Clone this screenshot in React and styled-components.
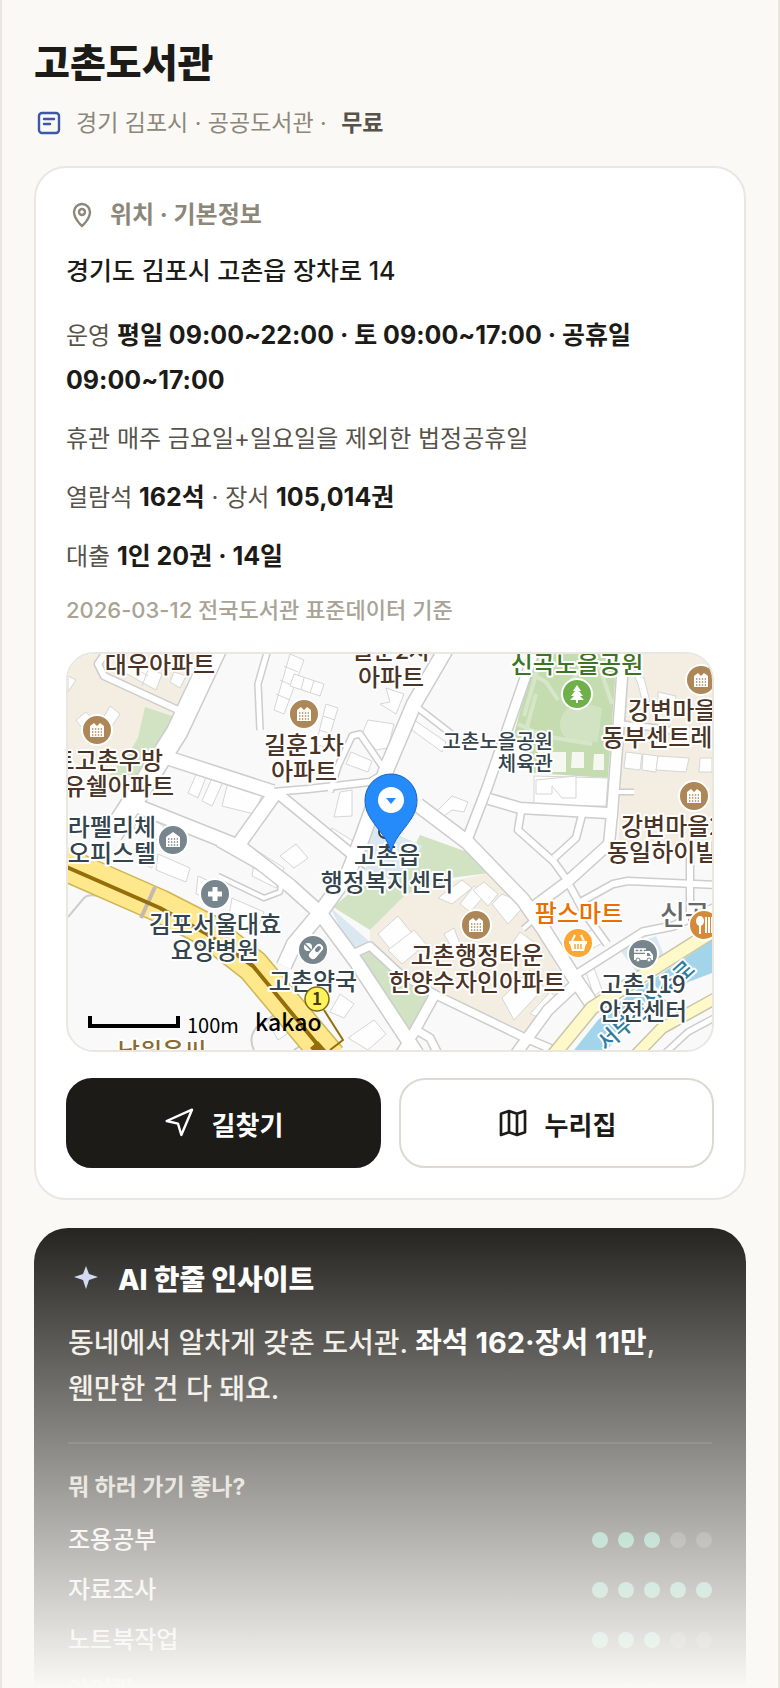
import styled, { createGlobalStyle } from 'styled-components';

const GlobalStyle = createGlobalStyle`
  * {
    box-sizing: border-box;
  }

  body {
    margin: 0;
    background-color: #faf9f6;
    color: #1c1b17;
    font-family: Inter, 'Noto Sans CJK KR', sans-serif;
    word-break: keep-all;
  }

  h1, h2, h3, p, ul {
    margin: 0;
    padding: 0;
  }
`;

const Page = styled.main`
  position: relative;
  height: 100vh;
  overflow: hidden;
  padding: 36px 32px 0;
  border: solid #e9e7e0;
  border-width: 0 2px;
`;

const Title = styled.h1`
  font-size: 39px;
  font-weight: 800;
  line-height: 54px;
`;

const Meta = styled.p`
  display: flex;
  align-items: center;
  gap: 12px;
  margin-top: 16px;
  font-size: 23px;
  line-height: 34px;
  color: #8c8779;

  strong {
    margin-left: 8px;
    font-weight: 600;
    color: #57534a;
  }
`;

const Card = styled.section`
  margin-top: 26px;
  padding: 30px;
  border: 2px solid #eae7e1;
  border-radius: 32px;
  background-color: #ffffff;
`;

const CardTitle = styled.h2`
  display: flex;
  align-items: center;
  gap: 12px;
  font-size: 24px;
  font-weight: 700;
  line-height: 34px;
  color: #8c8779;
`;

const Address = styled.p`
  margin-top: 17px;
  font-size: 25px;
  font-weight: 500;
  line-height: 44px;
`;

const InfoList = styled.div`
  display: flex;
  flex-direction: column;
  gap: 14px;
  margin-top: 20px;
`;

const InfoRow = styled.p`
  font-size: 24px;
  line-height: 44px;
  color: #57534a;

  strong {
    font-size: 25px;
    font-weight: 700;
    color: #1c1b17;
  }
`;

const Source = styled.p`
  margin-top: 13px;
  font-size: 22px;
  font-weight: 500;
  line-height: 36px;
  color: #a8a395;
`;

const MapBox = styled.div`
  height: 400px;
  margin-top: 24px;
  border: 2px solid #eae7e1;
  border-radius: 28px;
  overflow: hidden;
  background-color: #f9f9f9;

  svg {
    display: block;
    width: 100%;
    height: 100%;
  }
`;

const MapLabel = styled.text`
  font-family: 'Noto Sans CJK KR', sans-serif;
  font-size: ${({ $size }) => $size || 24}px;
  font-weight: 500;
  fill: ${({ $color }) => $color || '#4b3325'};
  stroke: #ffffff;
  stroke-width: 4px;
  stroke-linejoin: round;
  paint-order: stroke;
`;

const MapMark = styled.text`
  font-family: 'Noto Sans CJK KR', sans-serif;
  font-size: ${({ $size }) => $size}px;
  font-weight: ${({ $weight }) => $weight || 400};
  fill: ${({ $color }) => $color || '#000000'};
`;

const Actions = styled.div`
  display: flex;
  gap: 18px;
  margin-top: 26px;
`;

const ActionButton = styled.button`
  flex: 1;
  display: flex;
  align-items: center;
  justify-content: center;
  gap: 16px;
  height: 90px;
  border: 2px solid ${({ $primary }) => ($primary ? '#1c1b17' : '#dcd9d0')};
  border-radius: 26px;
  background-color: ${({ $primary }) => ($primary ? '#1c1b17' : '#ffffff')};
  color: ${({ $primary }) => ($primary ? '#ffffff' : '#1c1b17')};
  font-family: inherit;
  font-size: 26px;
  font-weight: 700;
  cursor: pointer;
`;

const Insight = styled.section`
  margin-top: 28px;
  padding: 34px;
  border-radius: 34px;
  background-color: #1c1b17;
`;

const InsightTitle = styled.h2`
  display: flex;
  align-items: center;
  gap: 14px;
  font-size: 28px;
  font-weight: 800;
  line-height: 36px;
  color: #ffffff;
`;

const InsightText = styled.p`
  margin-top: 22px;
  padding-bottom: 30px;
  border-bottom: 2px solid #33322e;
  font-size: 28px;
  font-weight: 500;
  line-height: 46px;
  color: #efece3;

  strong {
    font-size: 29px;
    font-weight: 700;
    color: #ffffff;
  }
`;

const Question = styled.h3`
  margin-top: 27px;
  font-size: 23px;
  font-weight: 700;
  line-height: 32px;
  color: #d5d0c2;
`;

const ScoreList = styled.ul`
  margin-top: 9px;
  list-style: none;
`;

const ScoreRow = styled.li`
  display: flex;
  align-items: center;
  justify-content: space-between;
  height: 50px;
  font-size: 24px;
  font-weight: 500;
  color: #f3f1ea;
`;

const Dots = styled.span`
  display: flex;
  gap: 10px;
  margin-top: 6px;
`;

const Dot = styled.span`
  width: 16px;
  height: 16px;
  border-radius: 50%;
  background-color: ${({ $on }) => ($on ? '#56b28f' : '#454440')};
`;

// 아래쪽으로 갈수록 배경색으로 사라지는 막
const Fade = styled.div`
  position: absolute;
  left: 0;
  right: 0;
  bottom: 0;
  height: 480px;
  background: linear-gradient(rgba(250, 249, 246, 0), #faf9f6);
  pointer-events: none;
`;

const scores = [
  { name: '조용공부', score: 3 },
  { name: '자료조사', score: 5 },
  { name: '노트북작업', score: 3 },
  { name: '아이랑', score: 3 },
];

const roads = [
  { d: 'M148-5L109 78L90 108L62 152L44 180', w: 20 },
  { d: 'M94 102L205 138', w: 13 },
  { d: 'M205 138L240 135L302 128L312 122', w: 6 },
  { d: 'M208 138L168 194', w: 13 },
  { d: 'M208 138L286 202L300 210', w: 9 },
  { d: 'M64 150L172 193L222 232L252 259L289 309L349 400', w: 13 },
  { d: 'M378-5L346 50L319 114L294 184L280 220L252 259L226 290L216 312', w: 14 },
  { d: 'M350 54L386 82', w: 5 },
  { d: 'M350 151L399 188L455 246L476 276L505 322L524 350', w: 13 },
  { d: 'M467-5L455 30L419 134L399 186', w: 9 },
  { d: 'M421 145L452 154L540 159', w: 10 },
  { d: 'M556-5L550 80L544 160L541 190L499 228L464 254', w: 10 },
  { d: 'M514 161L508 184L486 204', w: 6 },
  { d: 'M453 158L450 176L486 208L499 226', w: 6 },
  { d: 'M509 250L545 230L560 227L648 231', w: 6 },
  { d: 'M502 232L516 258L539 290', w: 6 },
  { d: 'M509 320L575 278L605 272L650 252', w: 7 },
  { d: 'M622 196L622 258', w: 6 },
  { d: 'M510 328L480 356L445 404', w: 10 },
  { d: 'M287 299L302 292L330 318L366 340L455 383L500 402', w: 7 },
  { d: 'M366 342L345 380L330 404', w: 9 },
  { d: 'M345 374L362 384L370 400', w: 7 },
  { d: 'M553 70L590 74L610 78', w: 5 },
  { d: 'M548 138L566 138', w: 4 },
  { d: 'M455 275L470 262', w: 4 },
  { d: 'M262 138L270 112L284 82L292 80L314 112', w: 5 },
  { d: 'M200-5L190 30L192 76', w: 5 },
  { d: 'M40-5L30 10L36 22L110 56', w: 6 },
  { d: 'M150 190L214 226L212 238L196 244L150 222', w: 4 },
];

const buildings = [
  'M52 16L68 8L94 20L88 36Z',
  'M64 12L80 22M80 16L74 32',
  'M106 18L118 22L112 34L102 28Z',
  'M42 52L52 60L44 72L34 66Z',
  'M8 66L18 58L30 72L22 84Z',
  'M0 22L8 26L0 38Z',
  'M130 116L139 120L130 144L120 139Z',
  'M144 124L155 128L144 152L134 147Z',
  'M160 128L195 139L186 160L154 152Z',
  'M222 0L236 6L216 60L206 56Z',
  'M216 12L230 18M212 26L226 32M208 40L222 46',
  'M226 20L256 30L252 42L222 32Z',
  'M236 24L233 36M246 27L242 39',
  'M258 50L270 54L258 94L248 90Z',
  'M255 62L267 66M251 76L263 80',
  'M300 66L326 70L320 94L308 96L294 80Z',
  'M283 98L304 107L300 118L278 110Z',
  'M272 138L284 136L284 162L266 163Z',
  'M264 174L290 190L284 204L260 182Z',
  'M318 34L336 40L328 60L312 50L322 48Z',
  'M346 66L378 88L374 98L344 76Z',
  'M368 158L384 142L400 148L396 158L384 156L376 162Z',
  'M466 122L540 124L538 152L466 152Z',
  'M468 126L508 122L508 144L494 144L484 132L484 140L468 140Z',
  'M564 16L576 24L582 48L574 46L570 30Z',
  'M590 38L608 42L606 54L590 52Z',
  'M558 98L574 100L572 116L556 114Z',
  'M575 100L590 102L588 118L574 116Z',
  'M590 102L621 104L618 118L588 116Z',
  'M632 104L644 104L644 118L631 118Z',
  'M370 244L384 250L404 234L394 226Z',
  'M392 250L406 232L418 240L402 258Z',
  'M405 236L416 228L430 240L420 252Z',
  'M424 250L434 240L458 250L440 270Z',
  'M310 280L330 262L346 282L328 302Z',
  'M320 296L346 276L358 290L334 310Z',
  'M376 280L386 274L392 290L384 294Z',
  'M434 344L462 316L476 334L446 366Z',
  'M444 290L452 278L474 294L466 306Z',
  'M462 360L482 338L494 348L478 366Z',
  'M262 358L272 340L286 350L276 364Z',
  'M280 384L306 366L318 380L300 396Z',
  'M518 318L526 314L534 336L526 342Z',
  'M516 280L530 272L536 288L522 296Z',
  'M90 200L122 214L118 228L88 216Z',
  'M76 198L86 202L84 214L72 208Z',
  'M130 222L160 236L156 250L128 240Z',
  'M164 244L196 258L186 282L160 268Z',
  'M188 196L216 214L208 234L184 222Z',
  'M212 202L228 190L240 204L226 214Z',
  'M200 368L224 356L230 372L210 386Z',
  'M72 160L96 172L90 186L66 174Z',
];

const APARTMENT = '#ad8757';
const FACILITY = '#77868d';
const labels = [
  { x: 92, y: 19, text: '대우아파트' },
  { x: 95, y: 115, anchor: 'end', text: '트고촌우방' },
  { x: 106, y: 141, anchor: 'end', text: '유쉘아파트' },
  { x: 44, y: 182, text: '라펠리체', color: '#34444d' },
  { x: 44, y: 208, text: '오피스텔', color: '#34444d' },
  { x: 236, y: 100, text: '길훈1차' },
  { x: 236, y: 126, text: '아파트' },
  { x: 323, y: 5, text: '길훈2차' },
  { x: 323, y: 32, text: '아파트' },
  { x: 509, y: 19, text: '신곡노을공원', color: '#3b7522' },
  { x: 485, y: 95, anchor: 'end', text: '고촌노을공원', color: '#34444d', size: 20 },
  { x: 485, y: 117, anchor: 'end', text: '체육관', color: '#34444d', size: 20 },
  { x: 560, y: 65, anchor: 'start', text: '강변마을' },
  { x: 534, y: 92, anchor: 'start', text: '동부센트레빌' },
  { x: 553, y: 181, anchor: 'start', text: '강변마을2차' },
  { x: 539, y: 207, anchor: 'start', text: '동일하이빌' },
  { x: 319, y: 210, text: '고촌읍', color: '#34444d' },
  { x: 319, y: 237, text: '행정복지센터', color: '#34444d' },
  { x: 147, y: 279, text: '김포서울대효', color: '#34444d' },
  { x: 147, y: 305, text: '요양병원', color: '#34444d' },
  { x: 245, y: 336, text: '고촌약국', color: '#34444d' },
  { x: 409, y: 310, text: '고촌행정타운' },
  { x: 409, y: 337, text: '한양수자인아파트' },
  { x: 511, y: 268, text: '팜스마트', color: '#e87000' },
  { x: 592, y: 271, anchor: 'start', text: '신곡', color: '#686868', size: 27 },
  { x: 575, y: 339, text: '고촌119', color: '#34444d' },
  { x: 575, y: 366, text: '안전센터', color: '#34444d' },
  { x: 94, y: 406, text: '남원윤씨', color: '#8a6a30' },
];

const Poi = ({ x, y, color, children }) => (
  <g transform={`translate(${x} ${y})`}>
    <circle r="15" fill={color} stroke="#ffffff" strokeWidth="2" />
    {children}
  </g>
);

const ApartmentPoi = ({ x, y, color = APARTMENT, roof = 'M-7 7V-4L-3-7L0-4L3-7L7-4V7Z' }) => (
  <Poi x={x} y={y} color={color}>
    <path d={roof} fill="#ffffff" />
    <path
      d="M-5-1H5M-5 2H5M-5 5H5"
      stroke={color}
      strokeWidth="1.4"
      strokeDasharray="1.4 1.5"
    />
  </Poi>
);

const KakaoMap = () => (
  <svg viewBox="0 0 644 396" preserveAspectRatio="xMidYMid slice" role="img" aria-label="지도">
    <rect width="644" height="396" fill="#f9f9f9" />
    <path d="M0 0H128L110 54L75 118L50 128L0 106Z" fill="#f3ede2" />
    <path d="M77 53L107 63L70 121H42L64 94L70 84Z" fill="#d1e3c2" />
    <path d="M558 0H644V190L602 192L550 196Z" fill="#f3ede2" />
    <path d="M467 0H549L540 124L465 119L446 80Z" fill="#c5dcb1" />
    <path d="M494 62Q500 48 520 50L534 54L530 88L500 86Q488 76 494 62Z" fill="#d1e3c2" />
    <path
      d="M464 20L478 28L490 46M450 70L476 82L524 90M474 0L456 62M524 0L494 40M530 8L544 50M468 40L456 84"
      fill="none"
      stroke="#d6e6c9"
      strokeWidth="4"
    />
    <path d="M470 98H498V118H468ZM504 98H516V114H503ZM526 100H536V116H525Z" fill="#f4f8f1" />
    <path d="M352 181L402 199L422 219L382 224L302 276L265 253L289 233L330 226Z" fill="#d1e3c2" />
    <path d="M370 230L422 219L460 259L498 330L459 380L365 339L302 290V276L338 240Z" fill="#f3ede2" />
    <path d="M287 303L299 294L362 338L339 381Z" fill="#d1e3c2" />
    <path d="M262 253L302 288L285 299Z" fill="#dae8f1" />
    <path d="M305 170L355 192L330 228L293 215Z" fill="#dae8f1" />
    <path d="M552 296L588 282L598 306L570 320Z" fill="#dae8f1" />
    <path d="M503 400L530 366L560 342L644 286V319L599 336L569 363L535 400Z" fill="#a2d4ea" />

    <g fill="#fefefe" stroke="#d6d6d6" strokeWidth="1">
      {buildings.map((d) => (
        <path d={d} key={d} />
      ))}
    </g>

    <g fill="none" strokeLinejoin="round">
      {roads.map((road) => (
        <path d={road.d} stroke="#cdcdcd" strokeWidth={road.w + 3} key={road.d} />
      ))}
      {roads.map((road) => (
        <path d={road.d} stroke="#ffffff" strokeWidth={road.w} key={road.d} />
      ))}
    </g>
    <path
      d="M0 263L16 244Q20 240 30 242M186 396Q180 384 188 374L210 358M226 396L244 384"
      fill="none"
      stroke="#cdcdcd"
      strokeWidth="2"
    />

    <g fill="none" strokeLinejoin="round">
      <path d="M483 404L524 354L582 317L650 274" stroke="#c9c6a8" strokeWidth="15" />
      <path d="M483 404L524 354L582 317L650 274" stroke="#fff9c9" strokeWidth="12" />
      <path d="M565 404L594 374L650 343" stroke="#c9c6a8" strokeWidth="13" />
      <path d="M565 404L594 374L650 343" stroke="#fff9c9" strokeWidth="10" />
      <path d="M592 404L620 378L650 362" stroke="#cdcdcd" strokeWidth="8" />
      <path d="M592 404L620 378L650 362" stroke="#ffffff" strokeWidth="5" />
      <path d="M-6 209L92 252L139 276L185 312L262 404" stroke="#cdb656" strokeWidth="34" />
      <path d="M-6 209L92 252L139 276L185 312L262 404" stroke="#ffe88b" strokeWidth="31" />
      <path d="M87 233L73 264" stroke="#c4b8b0" strokeWidth="4" />
      <path d="M-6 211L92 254L139 280L185 312L254 396" stroke="#936e0a" strokeWidth="4" />
      <path d="M256 356L275 386L262 396" stroke="#936e0a" strokeWidth="2" />
    </g>
    <path d="M242 394L250 387L258 396H244Z" fill="#936e0a" />

    <g transform="translate(538 398) rotate(-42)">
      <MapLabel $size={22} $color="#2e7d9e">
        서부간선수로
      </MapLabel>
    </g>

    <circle cx="317" cy="178" r="6" fill="#ffffff" stroke="#34444d" strokeWidth="2" />
    {labels.map((label) => (
      <MapLabel
        x={label.x}
        y={label.y}
        textAnchor={label.anchor || 'middle'}
        $size={label.size}
        $color={label.color}
        key={`${label.text}-${label.y}`}
      >
        {label.text}
      </MapLabel>
    ))}

    <ApartmentPoi x={29} y={76} />
    <ApartmentPoi x={236} y={60} />
    <ApartmentPoi x={633} y={26} />
    <ApartmentPoi x={626} y={142} />
    <ApartmentPoi x={408} y={271} />
    <ApartmentPoi x={105} y={186} color={FACILITY} roof="M-7 7V-3L0-8L7-3V7Z" />
    <Poi x={147} y={240} color={FACILITY}>
      <path d="M-7 0H7M0-7V7" stroke="#ffffff" strokeWidth="5" />
    </Poi>
    <Poi x={245} y={296} color={FACILITY}>
      <circle cx="-5" cy="-3" r="4" fill="#ffffff" />
      <path d="M-8-6L-2 0" stroke={FACILITY} strokeWidth="1.5" />
      <path d="M0 5L6-2" stroke="#ffffff" strokeWidth="8" strokeLinecap="round" />
      <path d="M4 0L6-2" stroke={FACILITY} strokeWidth="4" strokeLinecap="round" />
    </Poi>
    <Poi x={509} y={40} color="#6fb04b">
      <path d="M0-9L4-3H2L6 2H3L7 6H1V9H-1V6H-7L-3 2H-6L-2-3H-4Z" fill="#ffffff" />
    </Poi>
    <Poi x={510} y={289} color="#fba733">
      <path d="M-9-2H9V1H8L6 8H-6L-8 1H-9Z" fill="#ffffff" />
      <path d="M-6-2L-3-8M6-2L3-8" stroke="#ffffff" strokeWidth="2" />
      <path d="M-3 1V6M0 1V6M3 1V6" stroke="#fba733" strokeWidth="1.5" />
    </Poi>
    <Poi x={575} y={300} color={FACILITY}>
      <path d="M-9-5H3M-9-2H3" stroke="#ffffff" strokeWidth="1.5" />
      <path d="M-8-5V-2M-4-5V-2M0-5V-2" stroke="#ffffff" strokeWidth="1.5" />
      <path d="M-9 0H2V-3H7L10 1V6H-9Z" fill="#ffffff" />
      <path d="M4-1H6L8 2H4Z" fill={FACILITY} />
      <circle cx="-5" cy="6" r="2" fill="#ffffff" stroke={FACILITY} />
      <circle cx="6" cy="6" r="2" fill="#ffffff" stroke={FACILITY} />
    </Poi>
    <Poi x={636} y={271} color="#d58a3a">
      <ellipse cx="-4" cy="-4" rx="4" ry="5" fill="#ffffff" />
      <path d="M-4 0V9M2-8V8M5-8V8M8-8V8" stroke="#ffffff" strokeWidth="2" />
    </Poi>

    <circle cx="249" cy="345" r="12" fill="#fff25c" stroke="#7d6a14" strokeWidth="1.5" />
    <MapMark x="249" y="351" textAnchor="middle" $size={17} $weight={700} $color="#4b3a10">
      1
    </MapMark>

    <path
      d="M323 199C320 184 312 179 303 165C299 159 297 153 297 146A26 26 0 0 1 349 146C349 153 347 159 343 165C334 179 326 184 323 199Z"
      fill="#258bfb"
      stroke="#1763c4"
      strokeWidth="1"
    />
    <circle cx="323" cy="146" r="13" fill="#ffffff" />
    <path d="M318 144H328L323 150Z" fill="#258bfb" />

    <path d="M22 362V372H110V362" fill="none" stroke="#000000" strokeWidth="4" />
    <MapMark x="119" y="379" $size={20}>
      100m
    </MapMark>
    <MapMark x="187" y="377" $size={23} $weight={500}>
      kakao
    </MapMark>
  </svg>
);

const NoteIcon = () => (
  <svg width="30" height="30" viewBox="0 0 30 30" fill="none" stroke="#3d58a8" strokeWidth="2.4" strokeLinecap="round" aria-hidden="true">
    <rect x="5" y="5" width="20" height="20" rx="3" />
    <path d="M10 11H20M10 16H16" />
  </svg>
);

const PinIcon = () => (
  <svg width="32" height="32" viewBox="0 0 32 32" fill="none" stroke="#8c8779" strokeWidth="2.4" strokeLinejoin="round" aria-hidden="true">
    <path d="M16 27C16 27 24 20 24 13A8 8 0 0 0 8 13C8 20 16 27 16 27Z" />
    <circle cx="16" cy="13" r="3" />
  </svg>
);

const SendIcon = () => (
  <svg width="32" height="32" viewBox="0 0 24 24" fill="none" stroke="#ffffff" strokeWidth="1.8" strokeLinejoin="round" aria-hidden="true">
    <path d="M2 10.5L21 2L13 21L10.500 12.500Z" />
  </svg>
);

const FoldedMapIcon = () => (
  <svg width="32" height="32" viewBox="0 0 24 24" fill="none" stroke="#1c1b17" strokeWidth="2" strokeLinejoin="round" aria-hidden="true">
    <path d="M3 5L9 3L15 5L21 3V19L15 21L9 19L3 21ZM9 3V19M15 5V21" />
  </svg>
);

const SparkIcon = () => (
  <svg width="36" height="36" viewBox="0 0 36 36" aria-hidden="true">
    <path d="M18 4L21 12L30 15L21 18L18 27L15 18L6 15L15 12Z" fill="#ccd6f2" />
  </svg>
);

const App = () => {
  return (
    <>
      <GlobalStyle />
      <Page>
        <Title>고촌도서관</Title>
        <Meta>
          <NoteIcon />
          <span>
            경기 김포시 · 공공도서관 · <strong>무료</strong>
          </span>
        </Meta>

        <Card>
          <CardTitle>
            <PinIcon />
            위치 · 기본정보
          </CardTitle>
          <Address>경기도 김포시 고촌읍 장차로 14</Address>
          <InfoList>
            <InfoRow>
              운영 <strong>평일 09:00~22:00 · 토 09:00~17:00 · 공휴일 09:00~17:00</strong>
            </InfoRow>
            <InfoRow>휴관 매주 금요일+일요일을 제외한 법정공휴일</InfoRow>
            <InfoRow>
              열람석 <strong>162석</strong> · 장서 <strong>105,014권</strong>
            </InfoRow>
            <InfoRow>
              대출 <strong>1인 20권 · 14일</strong>
            </InfoRow>
          </InfoList>
          <Source>2026-03-12 전국도서관 표준데이터 기준</Source>
          <MapBox>
            <KakaoMap />
          </MapBox>
          <Actions>
            <ActionButton type="button" $primary>
              <SendIcon />
              길찾기
            </ActionButton>
            <ActionButton type="button">
              <FoldedMapIcon />
              누리집
            </ActionButton>
          </Actions>
        </Card>

        <Insight>
          <InsightTitle>
            <SparkIcon />
            AI 한줄 인사이트
          </InsightTitle>
          <InsightText>
            동네에서 알차게 갖춘 도서관. <strong>좌석 162·장서 11만</strong>, 웬만한 건 다 돼요.
          </InsightText>
          <Question>뭐 하러 가기 좋나?</Question>
          <ScoreList>
            {scores.map((item) => (
              <ScoreRow key={item.name}>
                {item.name}
                <Dots role="img" aria-label={`5점 중 ${item.score}점`}>
                  {[1, 2, 3, 4, 5].map((n) => (
                    <Dot $on={n <= item.score} key={n} />
                  ))}
                </Dots>
              </ScoreRow>
            ))}
          </ScoreList>
        </Insight>
        <Fade />
      </Page>
    </>
  );
};

export default App;
